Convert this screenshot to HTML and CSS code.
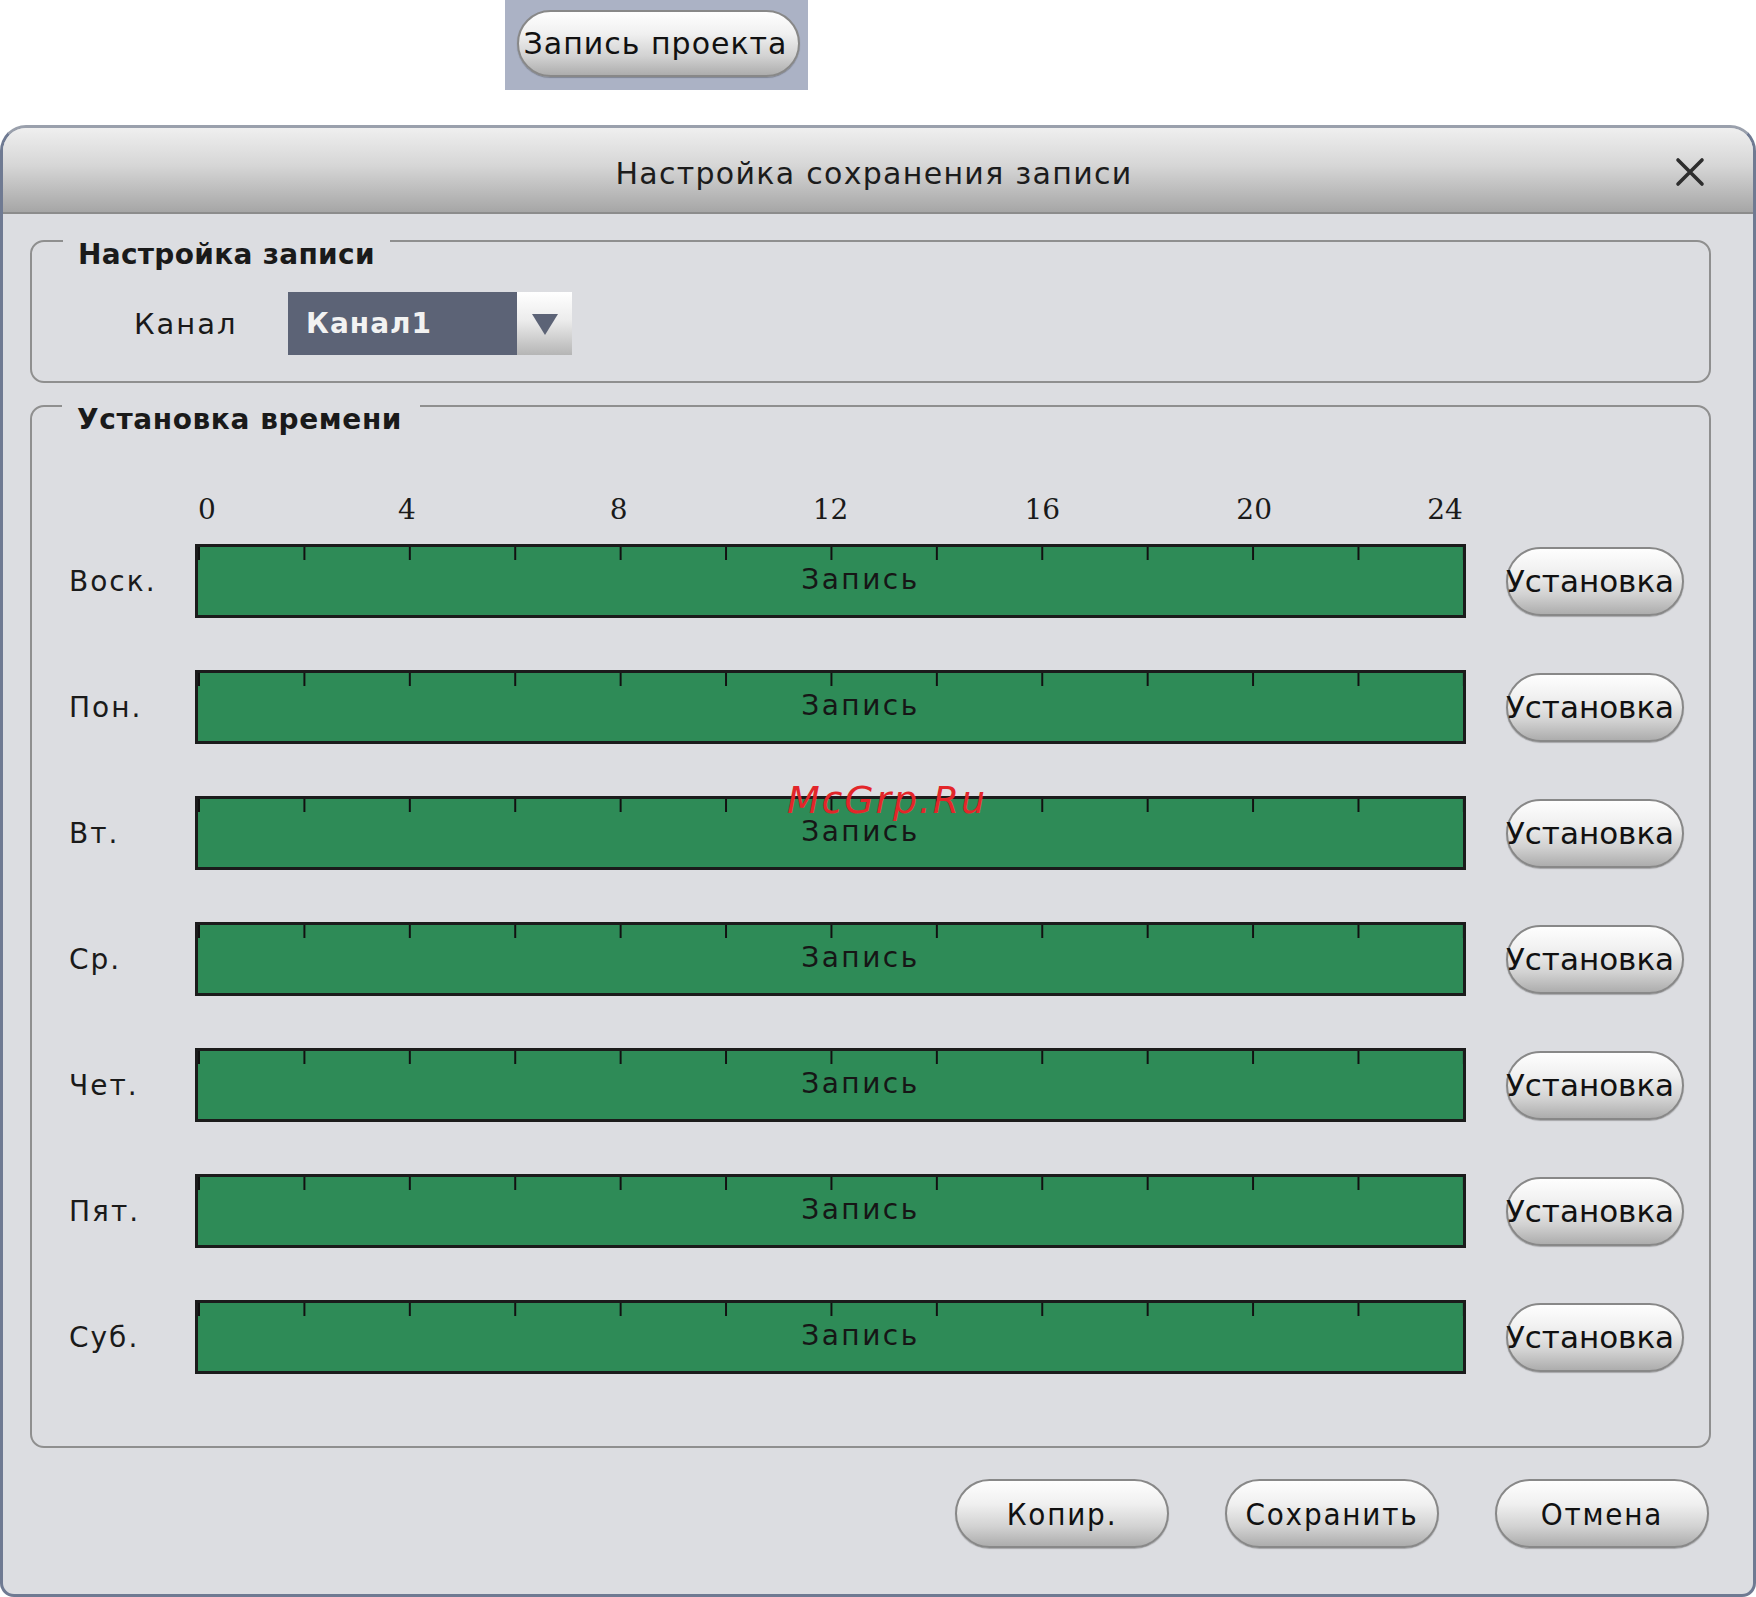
FILE: index.html
```html
<!DOCTYPE html>
<html>
<head>
    <title>Настройка сохранения записи</title>
    <link rel="stylesheet" href="styles.css">
</head>
<body>
    <div class="top">
        <div class="top-box">
            <button class="pill top-btn">Запись проекта</button>
        </div>
    </div>

    <div class="dialog">
        <div class="titlebar">
            <span class="title">Настройка сохранения записи</span>
            <svg class="close" width="30" height="30" viewBox="0 0 30 30">
                <path d="M3 3 L27 27 M27 3 L3 27" stroke="#2e2e2e" stroke-width="3.6" stroke-linecap="round"/>
            </svg>
        </div>

        <div class="dialog-body">
            <div class="group group-rec">
                <div class="group-title">Настройка записи</div>
                <div class="channel-row">
                    <span class="channel-label">Канал</span>
                    <div class="select">
                        <span class="select-value">Канал1</span>
                        <span class="select-arrow">
                            <svg width="28" height="24" viewBox="0 0 28 24"><path d="M1 2 H27 L14 23 Z" fill="#5c6376"/></svg>
                        </span>
                    </div>
                </div>
            </div>

            <div class="group group-time">
                <div class="group-title">Установка времени</div>
                <div class="hours">
                    <span class="hour">0</span>
                    <span class="hour">4</span>
                    <span class="hour">8</span>
                    <span class="hour">12</span>
                    <span class="hour">16</span>
                    <span class="hour">20</span>
                    <span class="hour">24</span>
                </div>
                <div class="days">
                    <div class="day-row">
                        <span class="day">Воск.</span>
                        <div class="bar">Запись</div>
                        <button class="pill set-btn">Установка</button>
                    </div>
                    <div class="day-row">
                        <span class="day">Пон.</span>
                        <div class="bar">Запись</div>
                        <button class="pill set-btn">Установка</button>
                    </div>
                    <div class="day-row">
                        <span class="day">Вт.</span>
                        <div class="bar">Запись</div>
                        <button class="pill set-btn">Установка</button>
                    </div>
                    <div class="day-row">
                        <span class="day">Ср.</span>
                        <div class="bar">Запись</div>
                        <button class="pill set-btn">Установка</button>
                    </div>
                    <div class="day-row">
                        <span class="day">Чет.</span>
                        <div class="bar">Запись</div>
                        <button class="pill set-btn">Установка</button>
                    </div>
                    <div class="day-row">
                        <span class="day">Пят.</span>
                        <div class="bar">Запись</div>
                        <button class="pill set-btn">Установка</button>
                    </div>
                    <div class="day-row">
                        <span class="day">Суб.</span>
                        <div class="bar">Запись</div>
                        <button class="pill set-btn">Установка</button>
                    </div>
                </div>
            </div>

            <div class="actions">
                <button class="pill action-btn">Копир.</button>
                <button class="pill action-btn">Сохранить</button>
                <button class="pill action-btn">Отмена</button>
            </div>
        </div>

        <div class="watermark">McGrp.Ru</div>
    </div>
</body>
</html>
```

FILE: styles.css
```css
body {
    margin: 0;
    background: #ffffff;
    font-family: "DejaVu Sans", Verdana, sans-serif;
    color: #1a1a1a;
    width: 1756px;
}

/* top button strip */
.top {
    height: 125px;
}

.top-box {
    margin-left: 505px;
    width: 303px;
    height: 90px;
    background: #abb2c5;
    padding: 10px 0 0 12px;
    box-sizing: border-box;
}

.pill {
    font-family: "DejaVu Sans", Verdana, sans-serif;
    color: #111;
    background: linear-gradient(#fefefe, #f0f0f0 35%, #d2d2d2 70%, #adadad);
    border: 2px solid #888;
    border-radius: 40px;
    padding: 0;
    white-space: nowrap;
    cursor: pointer;
    box-shadow: 0 1px 1px rgba(0, 0, 0, 0.25);
}

.top-btn {
    width: 283px;
    height: 67px;
    font-size: 30px;
    letter-spacing: 1px;
    text-indent: -6px;
}

/* dialog window */
.dialog {
    position: relative;
    height: 1472px;
    box-sizing: border-box;
    border: 3px solid #6f7a92;
    border-top-color: #9aa0ac;
    border-radius: 26px 26px 14px 14px;
    background: #dcdde1;
    overflow: hidden;
}

.titlebar {
    height: 84px;
    background: linear-gradient(#efefef, #d6d6d6 45%, #a6a6a6);
    border-bottom: 2px solid #8c8c8c;
    display: flex;
    align-items: center;
    justify-content: center;
    position: relative;
}

.title {
    font-size: 30px;
    letter-spacing: 1.3px;
    color: #1c1c1c;
    margin-top: 6px;
    margin-right: 8px;
}

.close {
    position: absolute;
    right: 48px;
    top: 29px;
}

.dialog-body {
    padding: 26px 0 0 27px;
}

.group {
    position: relative;
    width: 1681px;
    box-sizing: border-box;
    border: 2px solid #8f8f8f;
    border-radius: 14px;
}

.group-title {
    position: absolute;
    top: -3px;
    left: 31px;
    padding: 0 15px;
    background: #dcdde1;
    font-size: 28px;
    font-weight: bold;
    line-height: 32px;
    letter-spacing: 0.3px;
}

.group-time .group-title {
    left: 30px;
    padding-right: 18px;
    letter-spacing: 0.6px;
}

/* channel selector */
.group-rec {
    height: 143px;
    padding: 50px 0 0 102px;
}

.channel-row {
    display: flex;
    align-items: center;
}

.channel-label {
    font-size: 29px;
    letter-spacing: 2px;
    width: 154px;
}

.select {
    display: flex;
    height: 63px;
}

.select-value {
    width: 229px;
    box-sizing: border-box;
    background: #5c6376;
    color: #f2f2f2;
    font-size: 28px;
    font-weight: bold;
    letter-spacing: 1px;
    padding-left: 18px;
    display: flex;
    align-items: center;
}

.select-arrow {
    width: 55px;
    background: linear-gradient(#ffffff, #ececec 45%, #b5b5b5);
    display: flex;
    align-items: center;
    justify-content: center;
}

/* schedule */
.group-time {
    margin-top: 22px;
    padding: 86px 0 72px 37px;
}

.hours {
    display: flex;
    justify-content: space-between;
    margin-left: 126px;
    width: 1271px;
    height: 34px;
    margin-bottom: 17px;
    font-family: "DejaVu Serif", "Liberation Serif", serif;
    font-size: 28px;
    line-height: 34px;
}

.hour {
    width: 0;
    display: flex;
    justify-content: center;
}

.hour:first-child {
    transform: translateX(12px);
}

.hour:last-child {
    transform: translateX(-21px);
}

.days {
    display: flex;
    flex-direction: column;
    gap: 52px;
}

.day-row {
    display: flex;
    align-items: center;
}

.day {
    width: 126px;
    font-size: 28px;
    letter-spacing: 2px;
}

.bar {
    width: 1271px;
    height: 74px;
    box-sizing: border-box;
    border: 3px solid #1b1b1b;
    background-color: #2e8b57;
    background-image: linear-gradient(to right, transparent calc(100% - 2px), #111 calc(100% - 2px));
    background-size: calc(100% / 12) 13px;
    background-position: 2px 0;
    background-repeat: repeat-x;
    display: flex;
    align-items: center;
    justify-content: center;
    padding-left: 60px;
    padding-bottom: 4px;
    font-size: 28px;
    letter-spacing: 2.5px;
    color: #161616;
}

.set-btn {
    margin-left: 40px;
    width: 178px;
    height: 69px;
    font-size: 31px;
    text-indent: -10px;
}

/* bottom buttons */
.actions {
    width: 1681px;
    display: flex;
    justify-content: flex-end;
    gap: 56px;
    margin-top: 31px;
    padding-right: 2px;
    box-sizing: border-box;
}

.action-btn {
    width: 214px;
    height: 69px;
    font-family: "DejaVu Sans Condensed", "DejaVu Sans", sans-serif;
    font-size: 31px;
    letter-spacing: 1.8px;
}

.watermark {
    position: absolute;
    left: 784px;
    top: 650px;
    font-size: 38px;
    font-style: italic;
    letter-spacing: 1.8px;
    color: #e3262a;
}
```
